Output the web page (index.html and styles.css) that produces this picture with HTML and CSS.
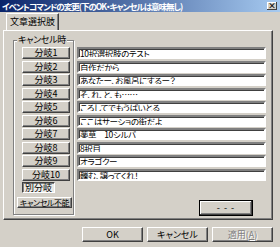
FILE: index.html
```html
<!DOCTYPE html>
<html lang="ja">
<head>
<meta charset="utf-8">
<link rel="stylesheet" href="styles.css">
</head>
<body>
<div class="titlebar">
  <span class="title">イベントコマンドの変更(下のOK・キャンセルは意味無し)</span>
  <span class="close">×</span>
</div>
<div class="main">
  <div class="tabs"><div class="tab">文章選択肢</div></div>
  <div class="panel">
    <div class="group">
      <div class="legend">キャンセル時</div>
      <div class="btns">
        <div class="btn branch">分岐1</div>
        <div class="btn branch">分岐2</div>
        <div class="btn branch">分岐3</div>
        <div class="btn branch">分岐4</div>
        <div class="btn branch">分岐5</div>
        <div class="btn branch">分岐6</div>
        <div class="btn branch">分岐7</div>
        <div class="btn branch">分岐8</div>
        <div class="btn branch">分岐9</div>
        <div class="btn branch">分岐10</div>
        <div class="btn pressed">別分岐</div>
        <div class="btn nocancel">キャンセル不能</div>
      </div>
    </div>
    <div class="fields">
      <div class="field">10択選択肢のテスト</div>
      <div class="field">自作だから</div>
      <div class="field">あなたー、お風呂にするー？</div>
      <div class="field">そ、れ、と、も……</div>
      <div class="field">ころしてでもうばいとる</div>
      <div class="field">ここはサーショの街だよ</div>
      <div class="field">薬草　10シルバ</div>
      <div class="field">8択目</div>
      <div class="field">オラゴクー</div>
      <div class="field">轢む、譲ってくれ！</div>
      <div class="btn dots">- - -</div>
    </div>
  </div>
  <div class="footer">
    <div class="btn fbtn">OK</div>
    <div class="btn fbtn">キャンセル</div>
    <div class="btn fbtn disabled">適用(<u>A</u>)</div>
  </div>
</div>
</body>
</html>
```
FILE: styles.css
```css
html, body {
  margin: 0;
  padding: 0;
}
body {
  width: 280px;
  height: 247px;
  overflow: hidden;
  background: #d4d0c8;
  font-family: "Noto Sans CJK JP", "Noto Sans", sans-serif;
  font-size: 9px;
  font-feature-settings: "palt";
  color: #000;
}
.titlebar {
  height: 12px;
  display: flex;
  align-items: center;
  justify-content: space-between;
  padding: 0 3px 0 2px;
  background: linear-gradient(to right, #0a246a, #a6caf0);
  color: #fff;
}
.title {
  font-weight: bold;
  font-size: 8.5px;
  line-height: 12px;
  letter-spacing: -1px;
  white-space: nowrap;
}
.close {
  width: 10px;
  height: 8px;
  background: #d4d0c8;
  color: #000;
  font-size: 8px;
  line-height: 8px;
  text-align: center;
  font-weight: bold;
  box-shadow: inset -1px -1px #404040, inset 1px 1px #fff;
}
.main {
  padding: 1px 0 0 3px;
}
.tabs {
  display: flex;
  padding-left: 3px;
  height: 17px;
}
.tab {
  position: relative;
  z-index: 1;
  width: 53px;
  height: 17px;
  box-sizing: border-box;
  border-top: 1px solid #fff;
  border-left: 1px solid #fff;
  border-right: 1px solid #404040;
  box-shadow: inset -1px 0 #808080;
  background: #d4d0c8;
  text-align: center;
  line-height: 16px;
  font-size: 9px;
}
.panel {
  width: 270px;
  height: 190px;
  box-sizing: border-box;
  border: 1px solid;
  border-color: #fff #404040 #404040 #fff;
  box-shadow: inset -1px -1px #808080;
  display: flex;
  align-items: flex-start;
  padding-left: 9px;
}
.group {
  margin-top: 9px;
  width: 61px;
  height: 175px;
  box-sizing: border-box;
  border: 1px solid #808080;
  box-shadow: inset 1px 1px #fff, 1px 1px #fff;
  padding: 0 0 0 8px;
}
.legend {
  display: table;
  margin: -6px 0 0 -5px;
  padding: 0 1px;
  background: #d4d0c8;
  line-height: 10px;
  height: 10px;
  white-space: nowrap;
  letter-spacing: -0.3px;
}
.btns {
  display: flex;
  flex-direction: column;
  align-items: flex-start;
  margin-top: 2px;
}
.btn {
  box-sizing: border-box;
  background: #d4d0c8;
  border: 1px solid;
  border-color: #fff #404040 #404040 #fff;
  box-shadow: inset -1px -1px #808080;
  text-align: center;
  white-space: nowrap;
}
.branch {
  width: 48px;
  height: 12px;
  line-height: 10px;
  margin-bottom: 1.5px;
}
.pressed {
  width: 33px;
  height: 11px;
  line-height: 9px;
  margin-top: 0px;
  border-color: #404040 #fff #fff #404040;
  box-shadow: inset 1px 1px #808080;
  background: #ecebe8;
}
.nocancel {
  width: 55px;
  height: 11px;
  line-height: 9px;
  margin: 4px 0 0 -5px;
  font-size: 8px;
  letter-spacing: -0.4px;
}
.fields {
  margin: 16px 0 0 3px;
  width: 189px;
  display: flex;
  flex-direction: column;
}
.field {
  height: 12px;
  box-sizing: border-box;
  margin-bottom: 1.5px;
  background: #fff;
  border: 2px solid;
  border-color: #808080 #fff #fff #808080;
  box-shadow: inset 1px 1px #404040;
  padding-left: 1px;
  line-height: 9px;
  font-size: 8.5px;
  letter-spacing: -0.4px;
  white-space: nowrap;
  overflow: hidden;
}
.dots {
  align-self: flex-end;
  margin: 18px 13px 0 0;
  width: 54px;
  height: 16px;
  line-height: 13px;
  border: 1px solid #000;
  box-shadow: inset -1px -1px #404040, inset 1px 1px #fff, inset -2px -2px #808080;
  letter-spacing: 1px;
}
.footer {
  display: flex;
  justify-content: flex-end;
  gap: 4px;
  margin-top: 7px;
  padding-right: 7px;
}
.fbtn {
  width: 61px;
  height: 15px;
  line-height: 13px;
}
.disabled {
  color: #808080;
  text-shadow: 1px 1px #fff;
}
```
